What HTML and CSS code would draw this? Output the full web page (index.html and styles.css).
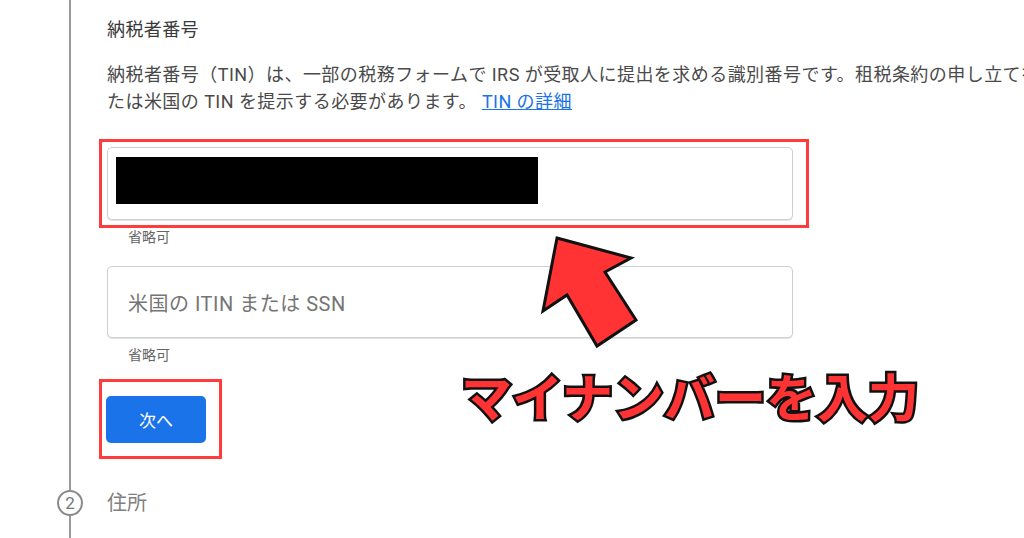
FILE: index.html
```html
<!DOCTYPE html>
<html lang="ja">
<head>
<meta charset="utf-8">
<title>納税者番号</title>
<link rel="stylesheet" href="styles.css">
</head>
<body>
<div class="page">
  <section class="step">
    <div class="rail"><div class="line"></div></div>
    <div class="content">
      <h2 class="title">納税者番号</h2>
      <p class="desc">納税者番号（TIN）は、一部の税務フォームで IRS が受取人に提出を求める識別番号です。租税条約の申し立てを<br>たは米国の TIN を提示する必要があります。 <a class="link" href="#">TIN の詳細</a></p>

      <div class="field field-marked">
        <div class="redact"></div>
      </div>
      <div class="helper">省略可</div>

      <div class="field field-empty">
        <span class="placeholder">米国の ITIN または SSN</span>
      </div>
      <div class="helper">省略可</div>

      <div class="actions">
        <button class="btn-next" type="button">次へ</button>
      </div>
    </div>
  </section>

  <section class="step step-next">
    <div class="rail">
      <div class="seg"></div>
      <div class="num">2</div>
      <div class="seg grow"></div>
    </div>
    <div class="label">住所</div>
  </section>

  <svg class="arrow" width="120" height="130" viewBox="0 0 120 130" aria-hidden="true">
    <polygon points="27,13 101,33 75,47 106,95 67,121 37,70 13,86" fill="#ff3333" stroke="#111" stroke-width="3" stroke-linejoin="miter"/>
  </svg>
  <div class="callout">マイナンバーを入力</div>
</div>
</body>
</html>
```

FILE: styles.css
```css
html, body {
  margin: 0;
  padding: 0;
  background: #ffffff;
}

body {
  width: 1024px;
  height: 538px;
  overflow: hidden;
  font-family: Roboto, "Noto Sans CJK JP", sans-serif;
  color: #444;
}

.page {
  position: relative;
  width: 1024px;
  height: 538px;
}

.step {
  display: flex;
}

.rail {
  box-sizing: border-box;
  width: 107px;
  flex: 0 0 107px;
  padding-left: 57px;
  padding-right: 24px;
  display: flex;
  flex-direction: column;
  align-items: center;
}

.line,
.seg {
  width: 2px;
  background: #9a9a9a;
}

.line {
  flex: 1 1 auto;
}

.content {
  flex: 1 1 auto;
  min-width: 0;
  padding-top: 16px;
  padding-bottom: 34px;
}

.title {
  margin: 0;
  font-size: 18px;
  line-height: 27px;
  font-weight: 400;
  letter-spacing: 0.4px;
  color: #3a3a3a;
}

.desc {
  margin: 18px 0 0 0;
  font-size: 18px;
  line-height: 27px;
  letter-spacing: 0.45px;
  white-space: nowrap;
  color: #4a4a4a;
}

.link {
  color: #1a73e8;
  text-decoration: underline;
}

.field {
  position: relative;
  box-sizing: border-box;
  width: 686px;
  height: 73px;
  border: 1px solid #cfcfcf;
  border-radius: 5px;
  box-shadow: 0 1px 1px rgba(0, 0, 0, 0.12);
  background: #fff;
  display: flex;
}

.field-marked {
  margin-top: 32px;
  padding: 9px 0 0 8px;
  align-items: flex-start;
}

.field-marked::after {
  content: "";
  position: absolute;
  top: -9px;
  left: -9px;
  right: -17px;
  bottom: -9px;
  border: 3px solid #ff3b3b;
}

.redact {
  width: 422px;
  height: 47px;
  background: #000;
}

.field-empty {
  margin-top: 19px;
  height: 72px;
  padding-left: 20px;
  align-items: center;
}

.placeholder {
  font-size: 20px;
  letter-spacing: 0.5px;
  color: #757575;
}

.helper {
  margin-top: 7px;
  padding-left: 21px;
  font-size: 14px;
  line-height: 20px;
  color: #666;
}

.actions {
  margin-top: 31px;
  display: flex;
}

.btn-next {
  position: relative;
  width: 100px;
  height: 47px;
  margin-left: -1px;
  border: none;
  border-radius: 5px;
  background: #1a73e8;
  color: #fff;
  font-family: Roboto, "Noto Sans CJK JP", sans-serif;
  font-size: 17px;
  padding: 0;
}

.btn-next::after {
  content: "";
  position: absolute;
  top: -17px;
  left: -7px;
  right: -16px;
  bottom: -16px;
  border: 3px solid #ff3b3b;
}

.step-next {
  height: 61px;
}

.seg {
  flex: 0 0 13px;
}

.seg.grow {
  flex: 1 1 auto;
}

.num {
  box-sizing: border-box;
  flex: 0 0 26px;
  width: 26px;
  height: 26px;
  border: 2px solid #8a8a8a;
  border-radius: 50%;
  display: flex;
  align-items: center;
  justify-content: center;
  font-size: 17px;
  color: #777;
}

.label {
  margin-top: 13px;
  font-size: 20px;
  line-height: 26px;
  color: #808080;
}

.arrow {
  position: absolute;
  left: 530px;
  top: 225px;
}

.callout {
  position: absolute;
  left: 461px;
  top: 366px;
  font-family: "Noto Sans CJK JP", sans-serif;
  font-size: 51px;
  line-height: 58px;
  font-weight: 700;
  color: #ff3333;
  -webkit-text-stroke: 5px #111;
  paint-order: stroke fill;
  white-space: nowrap;
}
```
